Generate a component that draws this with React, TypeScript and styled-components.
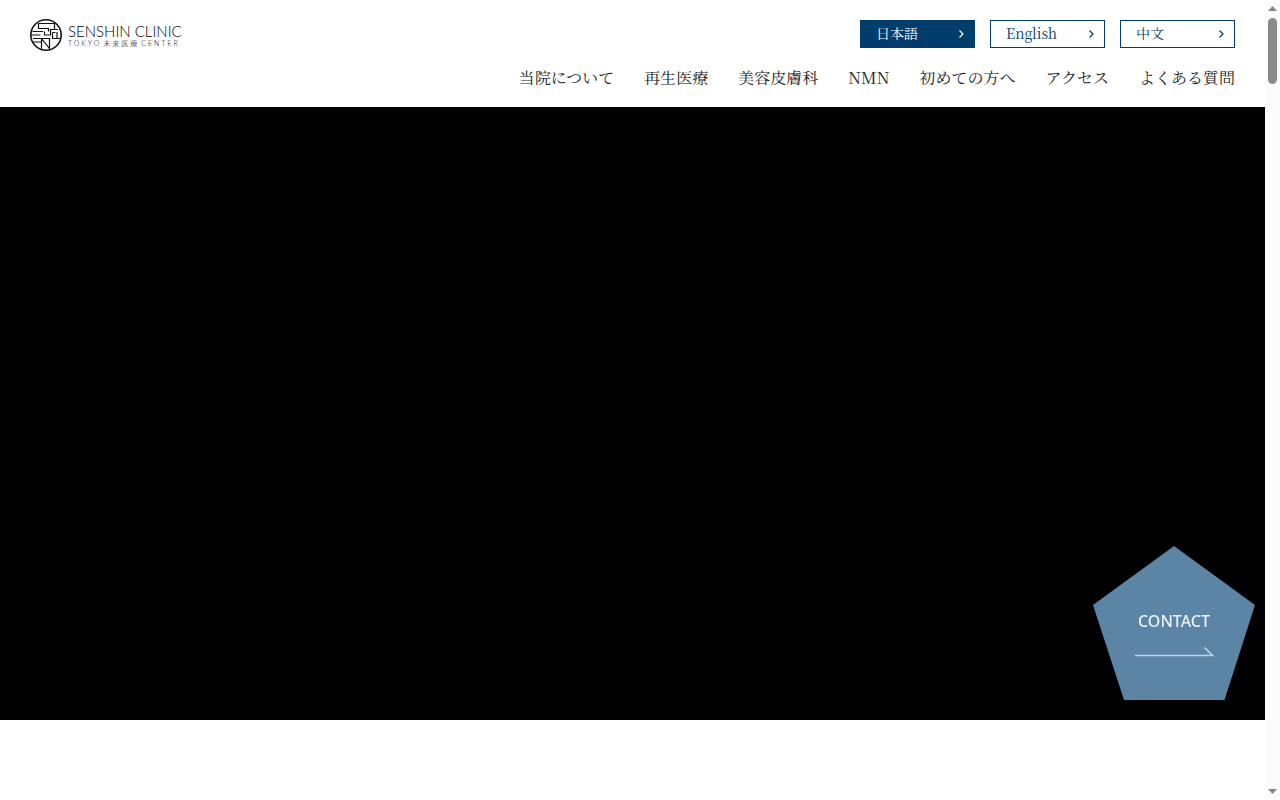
import React from "react";
import styled, { createGlobalStyle } from "styled-components";

const Global = createGlobalStyle`
  * { box-sizing: border-box; }
  body {
    margin: 0;
    background: #fff;
    color: #222;
    font-family: "Noto Serif JP", "Noto Serif CJK JP", "Noto Serif", "Liberation Serif", "Noto Sans CJK JP", serif;
  }
  a { color: inherit; text-decoration: none; }
`;

const Page = styled.div`
  display: grid;
  grid-template-columns: 1fr 15px;
  min-height: 100vh;
`;

const Content = styled.div`
  display: grid;
  grid-template-rows: auto 1fr 10vh;
  min-width: 0;
`;

const Header = styled.header`
  display: flex;
  justify-content: space-between;
  align-items: flex-start;
  padding: 19px 30px 17px;
`;

const Logo = styled.a`
  display: flex;
  align-items: center;
  gap: 6px;
  && { color: #000; }
`;

const LogoText = styled.span`
  display: flex;
  flex-direction: column;
  font-family: Lato, "Noto Sans CJK JP", sans-serif;
  font-weight: 300;
  white-space: nowrap;
`;

const LogoName = styled.span`
  font-size: 15px;
  line-height: 16px;
`;

const LogoSub = styled.span`
  display: flex;
  gap: 2px;
  font-size: 7px;
  line-height: 8px;
  letter-spacing: 2px;
`;

const HeaderRight = styled.div`
  display: flex;
  flex-direction: column;
  align-items: flex-end;
  gap: 18px;
  padding-top: 1px;
`;

const Languages = styled.div`
  display: flex;
  gap: 15px;
`;

const LanguageLink = styled.a<{ $active?: boolean }>`
  display: flex;
  align-items: center;
  justify-content: space-between;
  width: 115px;
  height: 28px;
  padding: 0 9px 0 15px;
  border: 1px solid #003c6c;
  background: ${(p) => (p.$active ? "#003c6c" : "#fff")};
  && { color: ${(p) => (p.$active ? "#fff" : "#003c6c")}; }
  font-size: 14px;
  line-height: 24px;
`;

const LanguageName = styled.span`
  padding-bottom: 2px;
`;

const Nav = styled.nav`
  display: flex;
  gap: 30px;
  font-size: 16px;
  line-height: 24px;
  white-space: nowrap;
`;

const Hero = styled.main`
  background: #000;
`;

const Contact = styled.a`
  position: fixed;
  right: 25px;
  bottom: 100px;
  display: grid;
  width: 162px;
  height: 154px;
`;

const ContactShape = styled.svg`
  grid-area: 1 / 1;
`;

const ContactLabel = styled.span`
  grid-area: 1 / 1;
  z-index: 1;
  padding-top: 64px;
  && { color: #e6f2fc; }
  font: 500 16px/22px "Noto Sans", sans-serif;
  text-align: center;
`;

const Scrollbar = styled.div`
  position: sticky;
  top: 0;
  display: flex;
  flex-direction: column;
  align-items: center;
  height: 100vh;
  padding: 6px 0;
  background: #fcfcfc;
`;

const Thumb = styled.div`
  width: 9px;
  height: 66px;
  margin: 7px 0 auto;
  border-radius: 5px;
  background: #8b8b8b;
`;

const Chevron = () => (
  <svg width="7" height="10" viewBox="0 0 7 10" fill="none" stroke="currentColor" strokeWidth="1.2" aria-hidden="true">
    <path d="M1.500 1.500 5 5 1.500 8.500" />
  </svg>
);

const languages = ["日本語", "English", "中文"];
const pages = ["当院について", "再生医療", "美容皮膚科", "NMN", "初めての方へ", "アクセス", "よくある質問"];

export default function App() {
  return (
    <Page>
      <Global />
      <Content>
        <Header>
          <Logo href="#">
            <svg width="32" height="32" viewBox="0 0 32 32" fill="none" stroke="#111" strokeWidth="1.2" aria-hidden="true">
              <circle cx="16" cy="16" r="15.2" strokeWidth="1.6" />
              <path d="M8.500 4V9.500H18.500V12.500M8.500 4.500H24.500V10.500M2.500 12.500H13M1 16H10.500M3 19.500H20M14.500 12.500V16H20.500V10.500H28M22.500 13.500V19.500H31M22.500 13.500H25.500M27 13V19.500M11.500 19.500V30.500M11.500 19.500 19.500 29.500V19.500M3 23H11.500" />
            </svg>
            <LogoText>
              <LogoName>SENSHIN CLINIC</LogoName>
              <LogoSub><span>TOKYO</span><span>未来医療</span><span>CENTER</span></LogoSub>
            </LogoText>
          </Logo>
          <HeaderRight>
            <Languages>
              {languages.map((name, i) => (
                <LanguageLink key={name} href="#" $active={i === 0}>
                  <LanguageName>{name}</LanguageName>
                  <Chevron />
                </LanguageLink>
              ))}
            </Languages>
            <Nav>
              {pages.map((name) => (
                <a key={name} href="#">{name}</a>
              ))}
            </Nav>
          </HeaderRight>
        </Header>
        <Hero />
      </Content>
      <Scrollbar aria-hidden="true">
        <svg width="9" height="5" viewBox="0 0 9 5"><path d="M0 5 4.500 0 9 5Z" fill="#858585" /></svg>
        <Thumb />
        <svg width="9" height="5" viewBox="0 0 9 5"><path d="M0 0 4.500 5 9 0Z" fill="#858585" /></svg>
      </Scrollbar>
      <Contact href="#">
        <ContactShape width="162" height="154" viewBox="0 0 162 154" fill="none" aria-hidden="true">
          <path d="M81 0 162 59 131.500 154H31L0 59Z" fill="#5c84a4" />
          <path d="M42 109.500H119.500L111.500 101.500" stroke="#c3d4e3" strokeWidth="1.6" />
        </ContactShape>
        <ContactLabel>CONTACT</ContactLabel>
      </Contact>
    </Page>
  );
}
